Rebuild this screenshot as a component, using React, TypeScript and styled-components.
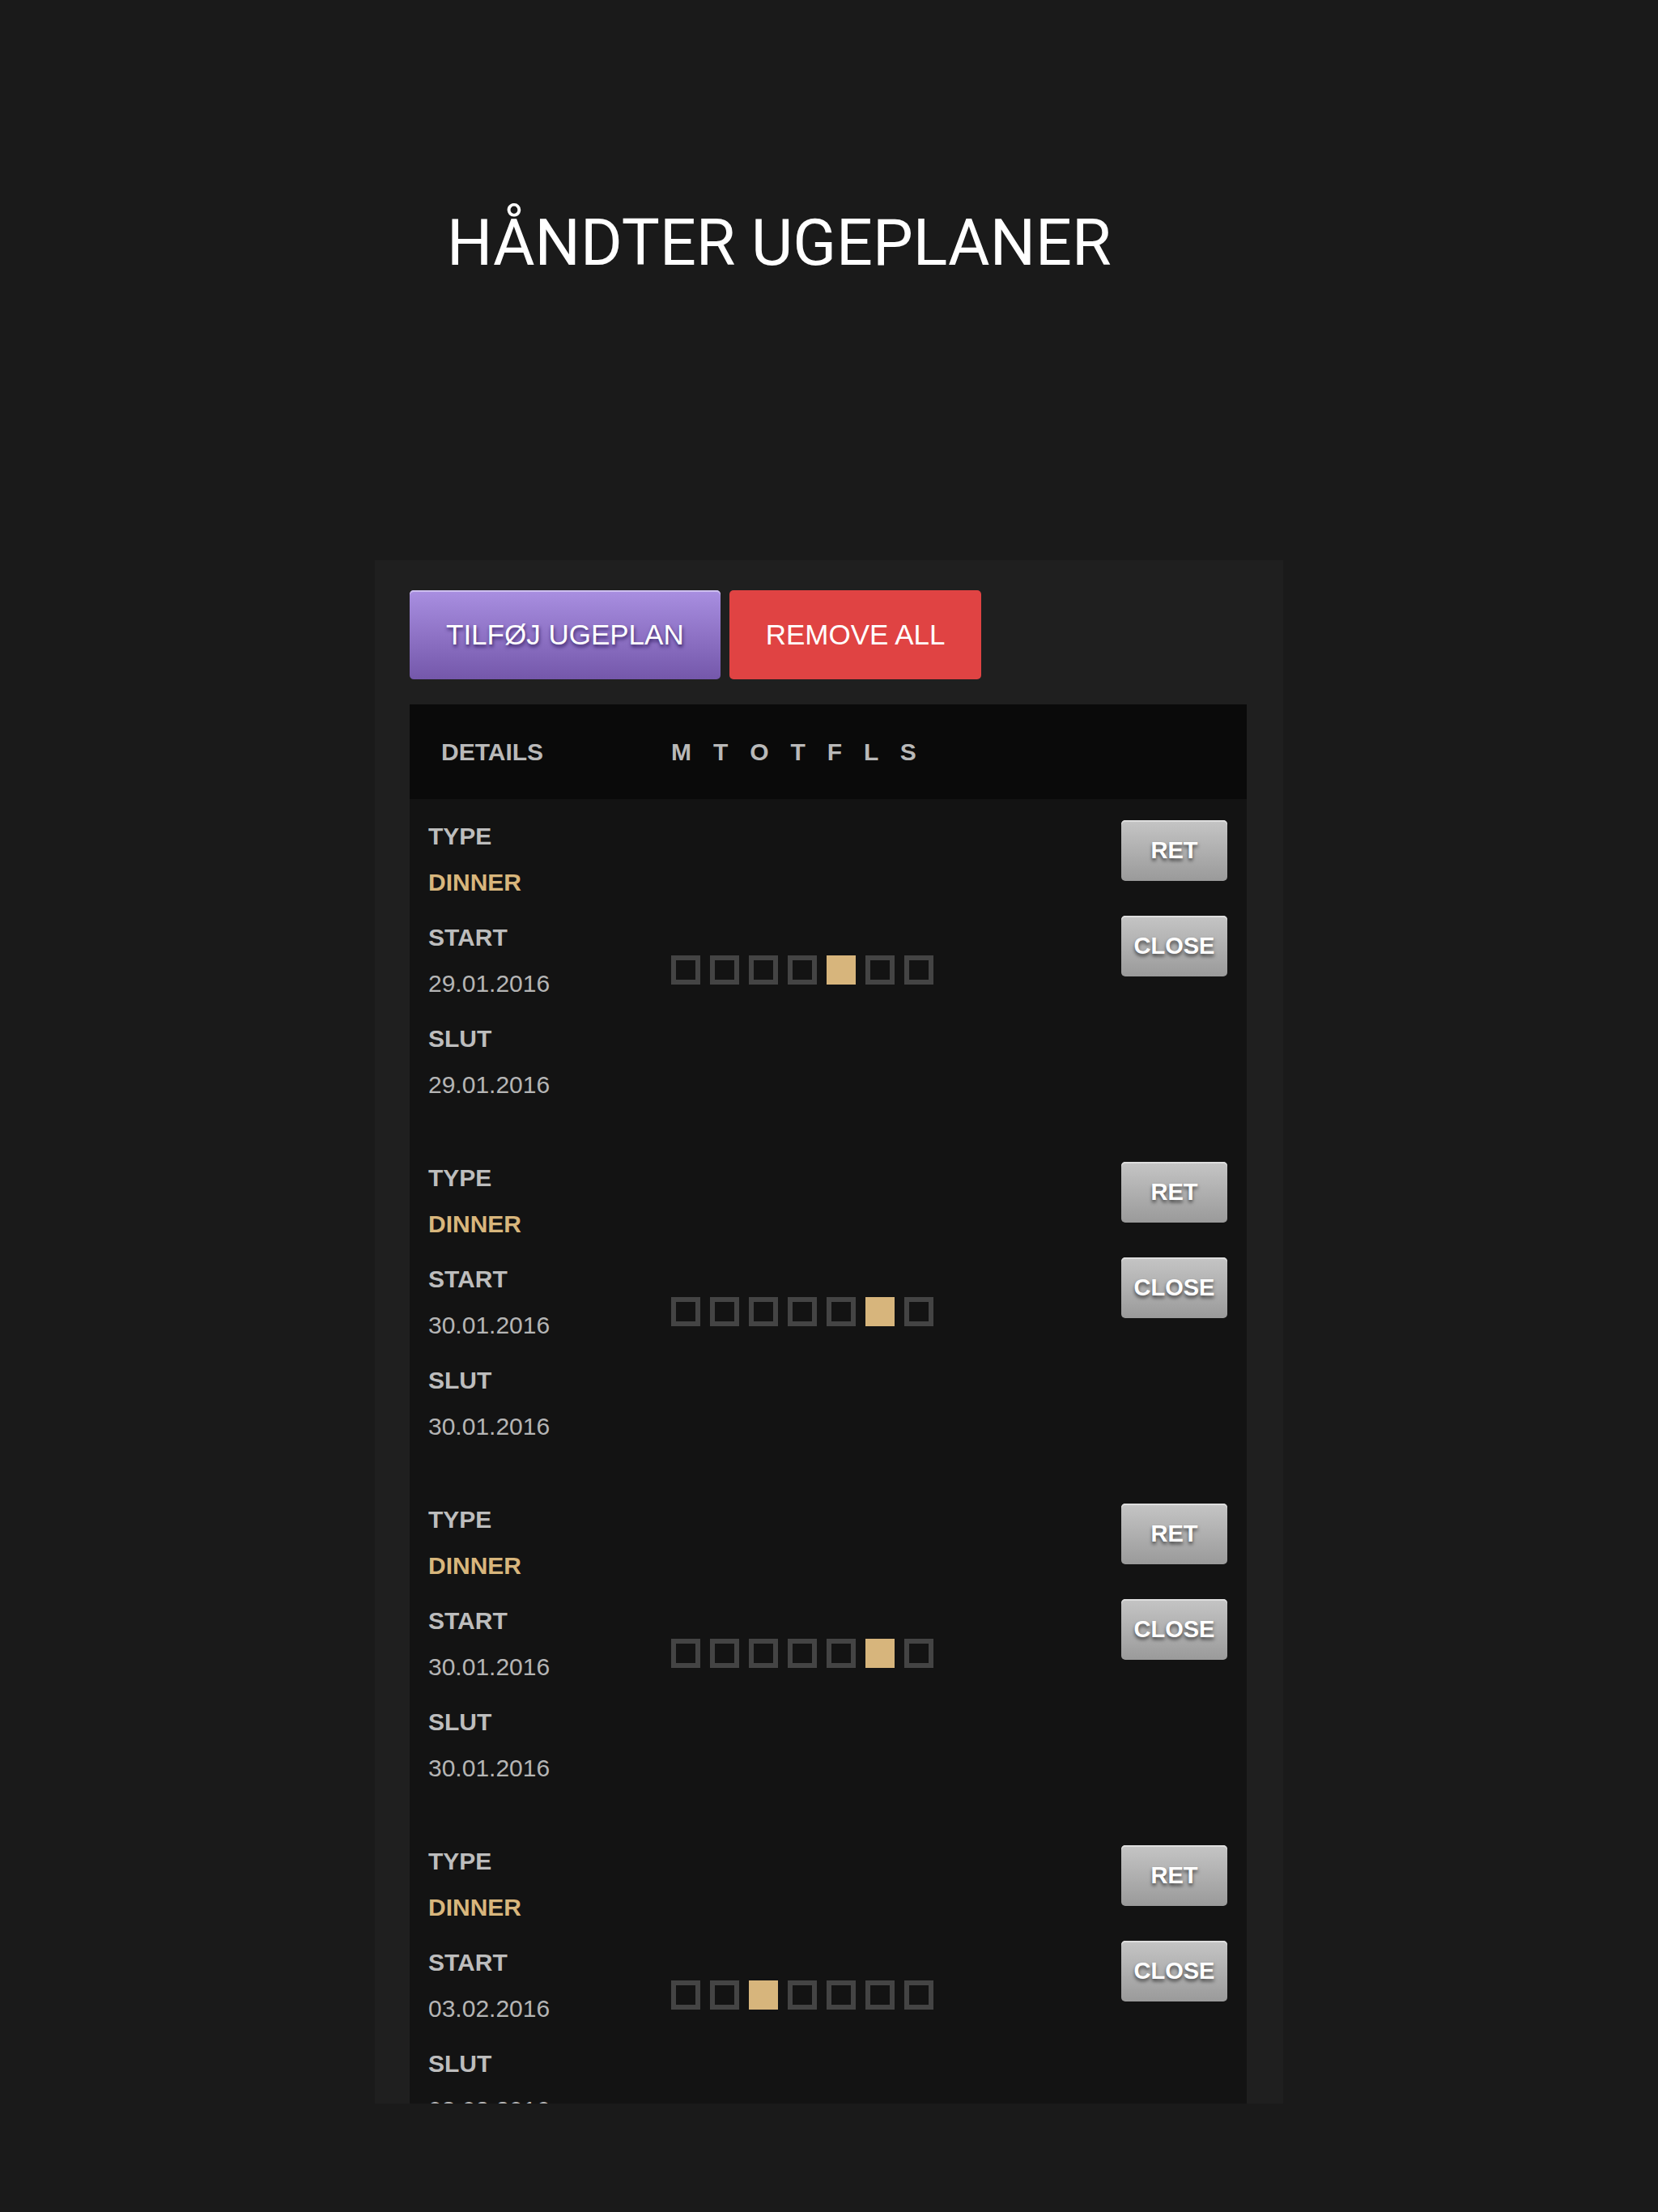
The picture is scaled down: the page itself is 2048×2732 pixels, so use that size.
import React from "react";
import styled, { createGlobalStyle } from "styled-components";

const GlobalStyle = createGlobalStyle`
  html, body {
    margin: 0;
    padding: 0;
    background: #1a1a1a;
  }
  body {
    font-family: "Liberation Sans", Arial, sans-serif;
  }
`;

interface Plan {
  type: string;
  start: string;
  end: string;
  day: number;
}

const plans: Plan[] = [
  { type: "DINNER", start: "29.01.2016", end: "29.01.2016", day: 4 },
  { type: "DINNER", start: "30.01.2016", end: "30.01.2016", day: 5 },
  { type: "DINNER", start: "30.01.2016", end: "30.01.2016", day: 5 },
  { type: "DINNER", start: "03.02.2016", end: "03.02.2016", day: 2 },
];

const weekDays = ["M", "T", "O", "T", "F", "L", "S"];

export default function App() {
  return (
    <>
      <GlobalStyle />
      <Page>
        <Title>HÅNDTER UGEPLANER</Title>
        <Panel>
          <Toolbar>
            <AddButton>TILFØJ UGEPLAN</AddButton>
            <RemoveButton>REMOVE ALL</RemoveButton>
          </Toolbar>
          <Table>
            <HeaderRow>
              <HeaderCell>DETAILS</HeaderCell>
              <DaysHeader>{weekDays.join(" ")}</DaysHeader>
            </HeaderRow>
            {plans.map((plan, i) => (
              <PlanRow key={i}>
                <DetailsCell>
                  <Field>
                    <Label>TYPE</Label>
                    <Value highlight>{plan.type}</Value>
                  </Field>
                  <Field>
                    <Label>START</Label>
                    <Value>{plan.start}</Value>
                  </Field>
                  <Field>
                    <Label>SLUT</Label>
                    <Value>{plan.end}</Value>
                  </Field>
                </DetailsCell>
                <DaysCell>
                  {weekDays.map((d, j) => (
                    <DayBox key={j} active={j === plan.day} title={d} />
                  ))}
                </DaysCell>
                <ActionsCell>
                  <GrayButton>RET</GrayButton>
                  <GrayButton>CLOSE</GrayButton>
                </ActionsCell>
              </PlanRow>
            ))}
          </Table>
        </Panel>
      </Page>
    </>
  );
}

const Page = styled.div`
  width: 1122px;
  margin: 0 auto;
  padding-top: 260px;
`;

const Title = styled.h1`
  margin: 0 0 0 89px;
  font-family: Roboto, "Liberation Sans", sans-serif;
  font-weight: 400;
  font-size: 79px;
  line-height: 80px;
  color: #ffffff;
`;

const Panel = styled.div`
  margin-top: 352px;
  height: 1906px;
  box-sizing: border-box;
  padding: 37px 45px 0 43px;
  background: #1f1f1f;
  overflow: hidden;
`;

const Toolbar = styled.div`
  display: flex;
  gap: 11px;
  margin-bottom: 31px;
`;

const BaseButton = styled.button`
  border: none;
  margin: 0;
  padding: 35px 45px;
  font-family: "Liberation Sans", Arial, sans-serif;
  font-size: 35px;
  line-height: 40px;
  color: #ffffff;
  border-radius: 5px;
  cursor: pointer;
`;

const AddButton = styled(BaseButton)`
  background: linear-gradient(#a98fe1, #7457aa);
  box-shadow: inset 0 2px 0 #cdbff0;
  text-shadow: 1px 3px 4px rgba(45, 25, 90, 0.85);
`;

const RemoveButton = styled(BaseButton)`
  background: #e04343;
`;

const Table = styled.div`
  width: 1034px;
`;

const HeaderRow = styled.div`
  display: grid;
  grid-template-columns: 323px 1fr;
  align-items: center;
  height: 117px;
  background: #0a0a0a;
  font-size: 30px;
  font-weight: 700;
  color: #b9b9b9;
`;

const HeaderCell = styled.div`
  padding-left: 39px;
`;

const DaysHeader = styled.div`
  letter-spacing: 9.3px;
`;

const PlanRow = styled.div`
  display: grid;
  grid-template-columns: 323px 1fr auto;
  background: #131313;
`;

const DetailsCell = styled.div`
  padding: 28px 0 19px 23px;
`;

const Field = styled.div`
  margin-bottom: 32px;
`;

const Label = styled.div`
  font-size: 30px;
  line-height: 36px;
  font-weight: 700;
  color: #bdbdbd;
`;

const Value = styled.div<{ highlight?: boolean }>`
  margin-top: 21px;
  font-size: 30px;
  line-height: 36px;
  font-weight: ${({ highlight }) => (highlight ? 700 : 400)};
  color: ${({ highlight }) => (highlight ? "#d8b67c" : "#b5b5b5")};
`;

const DaysCell = styled.div`
  display: flex;
  align-items: center;
  gap: 12px;
`;

const DayBox = styled.span<{ active?: boolean }>`
  display: block;
  width: 36px;
  height: 36px;
  box-sizing: border-box;
  border: 6px solid ${({ active }) => (active ? "#d7b57c" : "#444444")};
  background: ${({ active }) => (active ? "#d7b57c" : "transparent")};
`;

const ActionsCell = styled.div`
  display: flex;
  flex-direction: column;
  align-items: flex-end;
  gap: 43px;
  padding: 26px 24px 0 0;
`;

const GrayButton = styled.button`
  width: 131px;
  height: 75px;
  border: none;
  margin: 0;
  padding: 0;
  border-radius: 5px;
  background: linear-gradient(#c5c5c5, #9a9a9a);
  box-shadow: inset 0 2px 0 #dedede;
  font-family: "Liberation Sans", Arial, sans-serif;
  font-size: 29px;
  font-weight: 700;
  color: #ffffff;
  text-shadow: 0 3px 4px rgba(0, 0, 0, 0.6);
  cursor: pointer;
`;
